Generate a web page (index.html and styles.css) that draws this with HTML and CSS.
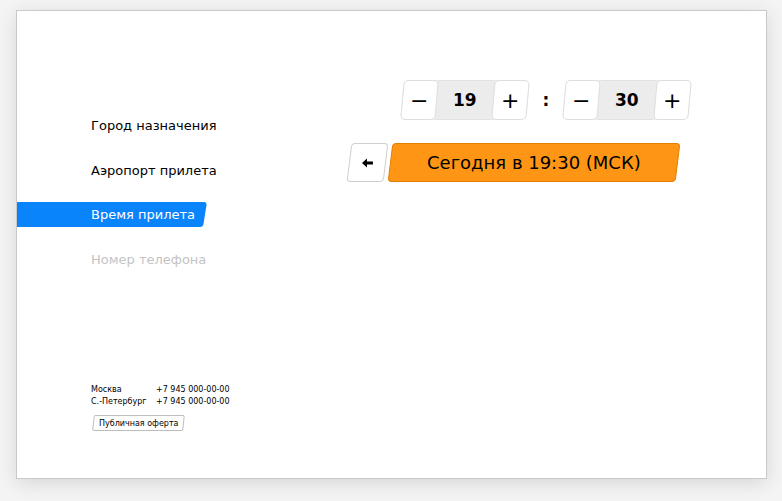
FILE: index.html
```html
<!DOCTYPE html>
<html lang="ru">
<head>
<meta charset="utf-8">
<title>Время прилета</title>
<link rel="stylesheet" href="styles.css">
</head>
<body>
<div class="card">
  <aside class="side">
    <nav class="nav">
      <div class="nav-item">Город назначения</div>
      <div class="nav-item">Аэропорт прилета</div>
      <div class="nav-item active">Время прилета</div>
      <div class="nav-item muted">Номер телефона</div>
    </nav>
    <div class="contacts">
      <div class="contact"><span class="city">Москва</span><span>+7 945 000-00-00</span></div>
      <div class="contact"><span class="city">С.-Петербург</span><span>+7 945 000-00-00</span></div>
      <div class="offer"><span>Публичная оферта</span></div>
    </div>
  </aside>
  <main class="main">
    <div class="time-row">
      <div class="stepper">
        <div class="btn"><span>−</span></div>
        <div class="value"><span>19</span></div>
        <div class="btn"><span>+</span></div>
      </div>
      <div class="colon">:</div>
      <div class="stepper">
        <div class="btn"><span>−</span></div>
        <div class="value"><span>30</span></div>
        <div class="btn"><span>+</span></div>
      </div>
    </div>
    <div class="action-row">
      <div class="back">
        <svg width="12" height="10" viewBox="0 0 12 10"><path d="M0 5 L5 0.5 V3.5 H11 V6.5 H5 V9.5 Z" fill="#000"/></svg>
      </div>
      <div class="submit"><span>Сегодня в 19:30 (МСК)</span></div>
    </div>
  </main>
</div>
</body>
</html>
```
FILE: styles.css
```css
html, body {
  margin: 0;
  padding: 0;
}
body {
  background: #f4f4f4;
  font-family: "DejaVu Sans", Verdana, sans-serif;
  color: #000;
  width: 782px;
  height: 501px;
  padding: 10px 15px 0 16px;
  box-sizing: border-box;
}
.card {
  width: 751px;
  height: 469px;
  box-sizing: border-box;
  background: #fff;
  border: 1px solid #c9c9c9;
  box-shadow: 0 4px 18px rgba(0,0,0,0.12);
  display: flex;
  overflow: hidden;
}
.side {
  width: 331px;
  flex: none;
  display: flex;
  flex-direction: column;
}
.nav {
  padding-top: 93px;
  display: flex;
  flex-direction: column;
}
.nav-item {
  height: 44.6px;
  line-height: 44.6px;
  padding-left: 74px;
  font-size: 13px;
  position: relative;
}
.nav-item.active {
  color: #fff;
  isolation: isolate;
}
.nav-item.active::before {
  content: "";
  position: absolute;
  left: -10px;
  width: 198px;
  top: 9px;
  height: 25px;
  background: #0a84fb;
  border-radius: 0 3px 3px 0;
  transform: skewX(-9deg);
  z-index: -1;
}
.nav-item.muted {
  color: #c4c4c4;
}
.contacts {
  margin-top: auto;
  padding: 0 0 47px 74px;
  font-size: 8px;
}
.contact {
  display: flex;
  height: 12px;
  line-height: 12px;
}
.city {
  width: 65px;
}
.offer {
  margin-top: 7px;
  margin-left: 2px;
  width: 91px;
  height: 16px;
  line-height: 15px;
  border: 1px solid #bdbdbd;
  border-radius: 2px;
  box-sizing: border-box;
  text-align: center;
  transform: skewX(-6deg);
}
.offer span {
  display: inline-block;
  transform: skewX(6deg);
}
.main {
  padding-top: 69px;
  padding-left: 1px;
  display: flex;
  flex-direction: column;
}
.time-row {
  display: flex;
  align-items: center;
  margin-left: 53px;
}
.stepper {
  display: flex;
  width: 126px;
  height: 40px;
  box-sizing: border-box;
  background: #ececec;
  border-radius: 5px;
  transform: skewX(-5deg);
}
.btn {
  width: 33px;
  background: #fff;
  border: 1px solid #dedede;
  border-radius: 5px;
  display: flex;
  align-items: center;
  justify-content: center;
  font-size: 22px;
  flex: none;
}
.btn span, .value span {
  transform: skewX(5deg);
}
.value {
  flex: 1;
  display: flex;
  align-items: center;
  justify-content: center;
  font-size: 17px;
  font-weight: bold;
  border-top: 1px solid #e2e2e2;
  border-bottom: 1px solid #e2e2e2;
}
.colon {
  width: 36px;
  text-align: center;
  font-size: 17px;
  font-weight: bold;
}
.action-row {
  display: flex;
  margin-top: 23px;
  gap: 4px;
}
.back {
  width: 37px;
  height: 39px;
  box-sizing: border-box;
  border: 1px solid #cfcfcf;
  border-radius: 4px;
  display: flex;
  align-items: center;
  justify-content: center;
  transform: skewX(-7deg);
}
.back svg {
  transform: skewX(7deg);
}
.submit {
  width: 288px;
  height: 39px;
  box-sizing: border-box;
  background: #ff9514;
  border: 1px solid #e07f00;
  border-radius: 4px;
  display: flex;
  align-items: center;
  justify-content: center;
  font-size: 18px;
  transform: skewX(-7deg);
}
.submit span {
  transform: skewX(7deg);
}
```
